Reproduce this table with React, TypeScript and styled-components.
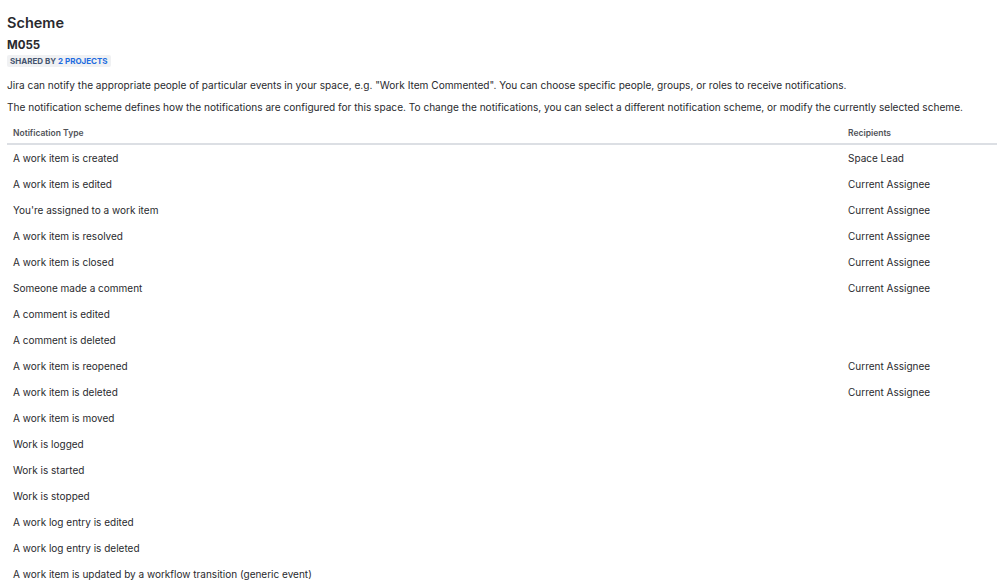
import styled, { createGlobalStyle } from "styled-components";

const rows: [string, string][] = [
    ["A work item is created", "Space Lead"],
    ["A work item is edited", "Current Assignee"],
    ["You're assigned to a work item", "Current Assignee"],
    ["A work item is resolved", "Current Assignee"],
    ["A work item is closed", "Current Assignee"],
    ["Someone made a comment", "Current Assignee"],
    ["A comment is edited", ""],
    ["A comment is deleted", ""],
    ["A work item is reopened", "Current Assignee"],
    ["A work item is deleted", "Current Assignee"],
    ["A work item is moved", ""],
    ["Work is logged", ""],
    ["Work is started", ""],
    ["Work is stopped", ""],
    ["A work log entry is edited", ""],
    ["A work log entry is deleted", ""],
    ["A work item is updated by a workflow transition (generic event)", ""],
];

const Global = createGlobalStyle`
    body {
        margin: 0;
        background: #fff;
        font-family: Inter, "Noto Sans", sans-serif;
        color: #292a2e;
    }
`;

const Page = styled.div`
    padding: 13px 0 0 7px;
`;

const Title = styled.h1`
    margin: 0;
    font-size: 14.5px;
    line-height: 20px;
    font-weight: 600;
`;

const SchemeName = styled.h2`
    margin: 4px 0 0;
    font-size: 11.5px;
    line-height: 16px;
    font-weight: 700;
`;

const Badge = styled.div`
    display: flex;
    width: fit-content;
    margin-top: 2px;
    padding: 0 3px;
    background: #f0f1f3;
    border-radius: 2px;
    font-size: 8px;
    line-height: 12px;
    font-weight: 700;
    color: #44546f;
`;

const BadgeLink = styled.span`
    color: #1d6ce0;
`;

const Text = styled.p<{ $tight?: boolean }>`
    margin: ${p => p.$tight ? "8px" : "11px"} 0 0;
    font-size: 10.1px;
    line-height: 14px;
`;

const Table = styled.table`
    margin-top: 6px;
    width: calc(100% - 1px);
    border-collapse: collapse;
    font-size: 10px;
`;

const Row = styled.tr``;

const Head = styled.th<{ $narrow?: boolean }>`
    text-align: left;
    padding: 7px 6px 4px;
    width: ${p => p.$narrow ? "143px" : "auto"};
    font-size: 8.5px;
    line-height: 12px;
    font-weight: 600;
    color: #505258;
    border-bottom: 2px solid #dcdfe4;
`;

const Cell = styled.td<{ $narrow?: boolean }>`
    padding: 0 6px;
    height: 26px;
    width: ${p => p.$narrow ? "143px" : "auto"};
    line-height: 13px;
`;

function App() {
    return (
        <>
            <Global />
            <Page>
                <Title>Scheme</Title>
                <SchemeName>M055</SchemeName>
                <Badge>
                    SHARED BY&nbsp;<BadgeLink>2 PROJECTS</BadgeLink>
                </Badge>
                <Text>
                    Jira can notify the appropriate people of particular events in your space, e.g. "Work Item Commented". You can choose specific people, groups, or roles to receive notifications.
                </Text>
                <Text $tight>
                    The notification scheme defines how the notifications are configured for this space. To change the notifications, you can select a different notification scheme, or modify the currently selected scheme.
                </Text>
                <Table>
                    <thead>
                        <Row>
                            <Head>Notification Type</Head>
                            <Head $narrow>Recipients</Head>
                        </Row>
                    </thead>
                    <tbody>
                        {rows.map(([type, who]) => (
                            <Row key={type}>
                                <Cell>{type}</Cell>
                                <Cell $narrow>{who}</Cell>
                            </Row>
                        ))}
                    </tbody>
                </Table>
            </Page>
        </>
    );
}

export default App;
